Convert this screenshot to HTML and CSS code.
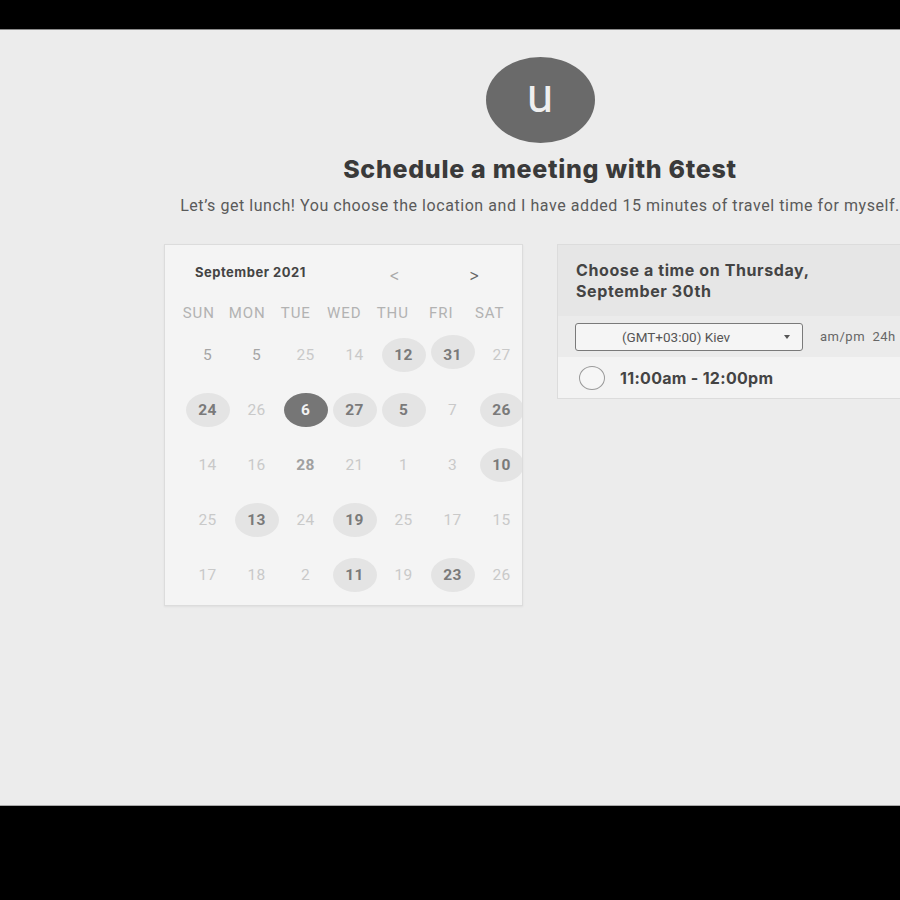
FILE: index.html
```html
<!DOCTYPE html>
<html>
<head>
<meta charset="utf-8">
<link rel="stylesheet" href="styles.css">
</head>
<body>
<div class="screen">
  <div class="topbar"></div>
  <div class="app">
    <div class="page">
      <div class="avatar">u</div>
      <h1 class="title">Schedule a meeting with 6test</h1>
      <p class="subtitle">Let’s get lunch! You choose the location and I have added 15 minutes of travel time for myself.</p>
      <div class="cards">
        <div class="calendar">
          <div class="cal-head">
            <span class="month">September 2021</span>
            <span class="nav nav-prev">&lt;</span>
            <span class="nav nav-next">&gt;</span>
          </div>
          <div class="dow">
            <span>SUN</span><span>MON</span><span>TUE</span><span>WED</span><span>THU</span><span>FRI</span><span>SAT</span>
          </div>
          <div class="dates">
            <span class="d mid">5</span><span class="d mid">5</span><span class="d">25</span><span class="d">14</span><span class="d av">12</span><span class="d av up">31</span><span class="d">27</span>
            <span class="d av">24</span><span class="d">26</span><span class="d sel">6</span><span class="d av">27</span><span class="d av">5</span><span class="d">7</span><span class="d av">26</span>
            <span class="d">14</span><span class="d">16</span><span class="d bold">28</span><span class="d">21</span><span class="d">1</span><span class="d">3</span><span class="d av">10</span>
            <span class="d">25</span><span class="d av">13</span><span class="d">24</span><span class="d av">19</span><span class="d">25</span><span class="d">17</span><span class="d">15</span>
            <span class="d">17</span><span class="d">18</span><span class="d">2</span><span class="d av">11</span><span class="d">19</span><span class="d av">23</span><span class="d">26</span>
          </div>
        </div>
        <div class="times">
          <div class="times-head">Choose a time on Thursday,<br>September 30th</div>
          <div class="tz-row">
            <div class="tz-select">
              <span class="tz-text">(GMT+03:00) Kiev</span>
              <span class="caret"></span>
            </div>
            <span class="fmt">am/pm&nbsp;&nbsp;24h</span>
          </div>
          <div class="slot">
            <span class="radio"></span>
            <span class="slot-text">11:00am - 12:00pm</span>
          </div>
        </div>
      </div>
    </div>
  </div>
  <div class="bottombar"></div>
</div>
</body>
</html>
```

FILE: styles.css
```css
* { box-sizing: border-box; }
html, body { margin: 0; padding: 0; background: #000; }
body { font-family: Roboto, "Liberation Sans", sans-serif; }

.screen { width: 900px; height: 900px; display: flex; flex-direction: column; overflow: hidden; }
.topbar { height: 29px; background: #000; flex: none; }
.app {
  height: 777px;
  flex: none;
  background: #ececec;
  border-top: 1px solid #8a8a8a;
  border-bottom: 1px solid #a8a8a8;
  overflow: hidden;
}
.bottombar { flex: 1; background: #000; }

.page {
  width: 1080px;
  display: flex;
  flex-direction: column;
  align-items: center;
  padding-top: 27px;
}

.avatar {
  width: 109px;
  height: 86px;
  border-radius: 50%;
  background: #6a6a6a;
  color: #efefef;
  font-family: Roboto, sans-serif;
  font-size: 48px;
  line-height: 78px;
  text-align: center;
}

.title {
  margin: 12px 0 0;
  font-family: Inter, sans-serif;
  font-weight: 800;
  font-size: 25px;
  line-height: 28px;
  color: #3a3a3a;
  letter-spacing: 0.7px;
}

.subtitle {
  margin: 13px 0 0;
  font-size: 16px;
  line-height: 20px;
  color: #5a5a5a;
  letter-spacing: 0.56px;
  white-space: nowrap;
}

.cards {
  margin-top: 28px;
  display: flex;
  gap: 34px;
  align-items: flex-start;
}

.calendar {
  width: 359px;
  background: #f4f4f4;
  border: 1px solid #dcdcdc;
  box-shadow: 0 1px 2px rgba(0,0,0,0.06);
  overflow: hidden;
  padding-bottom: 3px;
}

.cal-head {
  margin-top: 14px;
  height: 28px;
  display: flex;
  align-items: center;
  padding-left: 30px;
  font-family: Inter, sans-serif;
}
.month {
  font-weight: 700;
  font-size: 13px;
  letter-spacing: 0.5px;
  color: #444;
  margin-top: -3px;
  width: 190px;
}
.nav {
  font-family: "DejaVu Sans", sans-serif;
  font-size: 15px;
  margin-top: 5px;
  transform: scaleX(0.8);
}
.nav-prev { color: #a8a8a8; margin-left: 3px; }
.nav-next { color: #666; margin-left: 67px; }

.dow {
  margin-top: 14px;
  height: 24px;
  padding-left: 9.5px;
  display: grid;
  grid-template-columns: repeat(7, 48.5px);
  align-items: center;
  font-size: 15px;
  color: #b2b2b2;
  text-align: center;
  letter-spacing: 0.9px;
}

.dates {
  margin-top: 2px;
  margin-left: 18px;
  display: grid;
  grid-template-columns: repeat(7, 49px);
  grid-auto-rows: 55px;
  width: 343px;
}
.d {
  display: flex;
  align-items: center;
  justify-content: center;
  font-size: 15.5px;
  color: #c9c9c9;
  position: relative;
  z-index: 0;
  letter-spacing: 0.3px;
}
.d.mid { color: #a5a5a5; }
.d.bold { color: #a0a0a0; font-weight: 700; }
.d.av, .d.sel {
  font-weight: 700;
  color: #7a7a7a;
  isolation: isolate;
}
.d.av::before, .d.sel::before {
  content: "";
  position: absolute;
  left: 2.5px;
  top: 10.5px;
  width: 44px;
  height: 34px;
  border-radius: 50%;
  background: #e4e4e4;
  z-index: -1;
}
.d.up::before { top: 8px; }
.d.sel::before { background: #767676; }
.d.sel { color: #f2f2f2; }

.times {
  width: 359px;
  border: 1px solid #dcdcdc;
  background: #f3f3f3;
  flex: none;
}
.times-head {
  background: #e6e6e6;
  padding: 15px 18px 14px;
  font-family: Inter, sans-serif;
  font-weight: 700;
  font-size: 16px;
  line-height: 21px;
  letter-spacing: 0.6px;
  color: #444;
}
.tz-row {
  height: 41px;
  background: #ebebeb;
  display: flex;
  align-items: center;
  padding-left: 17px;
}
.tz-select {
  width: 228px;
  height: 28px;
  border: 1px solid #7a7a7a;
  border-radius: 3px;
  background: #f5f5f5;
  display: flex;
  align-items: center;
  padding-right: 26px;
  position: relative;
}
.tz-text {
  flex: 1;
  text-align: center;
  font-size: 13.5px;
  color: #555;
}
.caret {
  position: absolute;
  right: 12px;
  top: 11px;
  width: 0;
  height: 0;
  border-left: 3.5px solid transparent;
  border-right: 3.5px solid transparent;
  border-top: 4px solid #555;
}
.fmt {
  margin-left: 17px;
  font-size: 13px;
  letter-spacing: 0.5px;
  color: #666;
}

.slot {
  height: 41px;
  display: flex;
  align-items: center;
  padding-left: 21px;
  background: #f3f3f3;
}
.radio {
  width: 26px;
  height: 24px;
  border-radius: 50%;
  border: 1.5px solid #9a9a9a;
  background: #f6f6f6;
}
.slot-text {
  margin-left: 15px;
  font-family: Inter, sans-serif;
  font-weight: 700;
  font-size: 16px;
  letter-spacing: 0.3px;
  color: #444;
}
```
